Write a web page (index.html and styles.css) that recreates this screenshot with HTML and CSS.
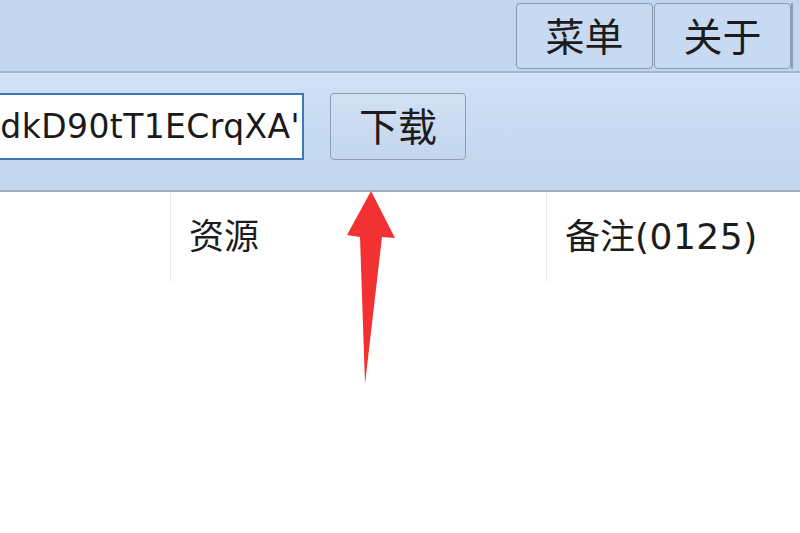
FILE: index.html
```html
<!DOCTYPE html>
<html lang="zh-CN">
<head>
    <meta charset="UTF-8">
    <title>下载</title>
    <link rel="stylesheet" href="styles.css">
</head>
<body>

<div class="toolbar">
    <div class="menu">
        <button class="menu-btn">菜单</button>
        <button class="menu-btn">关于</button>
    </div>
</div>

<div class="addrbar">
    <div class="url-box"><span class="url-text">dkD90tT1ECrqXA'</span></div>
    <button class="down-btn">下载</button>
</div>

<div class="list">
    <div class="list-head">
        <div class="col col-name"></div>
        <div class="col col-res">资源</div>
        <div class="col col-note">备注<span class="num">(0125)</span></div>
    </div>
</div>

<!-- red arrow annotation -->
<svg class="arrow" width="60" height="200" viewBox="0 0 60 200">
    <path d="M26 0 L50 47 L37 46 L20 193 L15 46 L2 44 Z" fill="#f23232"/>
</svg>

</body>
</html>
```

FILE: styles.css
```css
* {
    margin: 0;
    padding: 0;
    box-sizing: border-box;
}
body {
    width: 800px;
    height: 533px;
    overflow: hidden;
    background-color: #fff;
    font-family: "Noto Sans", "Noto Sans CJK SC", sans-serif;
    color: #1a1a1a;
    position: relative;
}
.toolbar {
    height: 73px;
    background-color: #c3d6ef;
    border-bottom: 2px solid #a6b6ca;
    display: flex;
    justify-content: flex-end;
    padding: 3px 7px 0 0;
}
.menu {
    display: flex;
    height: 66px;
    border-right: 2px solid #8ea0b6;
}
.menu-btn {
    width: 137px;
    height: 66px;
    background-color: #c8daf1;
    border: 1px solid #8c9cb0;
    border-radius: 4px;
    font-family: "Noto Sans CJK SC", sans-serif;
    font-size: 39px;
    color: #1c1c1c;
    margin-left: 1px;
    padding-bottom: 4px;
}
.addrbar {
    height: 119px;
    background: linear-gradient(#d3e2f6, #c8dbf2 40%, #c2d6ef);
    border-bottom: 2px solid #a3adb9;
    display: flex;
    align-items: flex-start;
    padding-top: 20px;
}
.url-box {
    width: 304px;
    height: 67px;
    background-color: #fff;
    border: 2px solid #3a78b8;
    border-left: none;
    display: flex;
    justify-content: flex-end;
    align-items: center;
    overflow: hidden;
    padding-right: 2px;
}
.url-text {
    white-space: nowrap;
    font-family: "DejaVu Sans", sans-serif;
    font-size: 33px;
    letter-spacing: 0.4px;
    color: #1a1a1a;
}
.down-btn {
    margin-left: 26px;
    width: 136px;
    height: 67px;
    background: linear-gradient(#d2e1f4, #c3d6ee);
    border: 1px solid #8e9fb4;
    border-radius: 4px;
    font-family: "Noto Sans CJK SC", sans-serif;
    font-size: 39px;
    color: #1c1c1c;
    padding-bottom: 6px;
}
.list-head {
    display: flex;
    height: 90px;
}
.col {
    font-family: "Noto Sans CJK SC", sans-serif;
    font-size: 35px;
    padding: 16px 0 0 18px;
    color: #1c1c1c;
}
.num {
    font-family: "DejaVu Sans", sans-serif;
    font-size: 36px;
    letter-spacing: 0.5px;
}
.col-name {
    width: 171px;
    border-right: 1px solid #ececec;
}
.col-res {
    width: 376px;
    border-right: 1px solid #ececec;
}
.col-note {
    flex: 1;
}
.arrow {
    position: absolute;
    left: 345px;
    top: 191px;
}
```
